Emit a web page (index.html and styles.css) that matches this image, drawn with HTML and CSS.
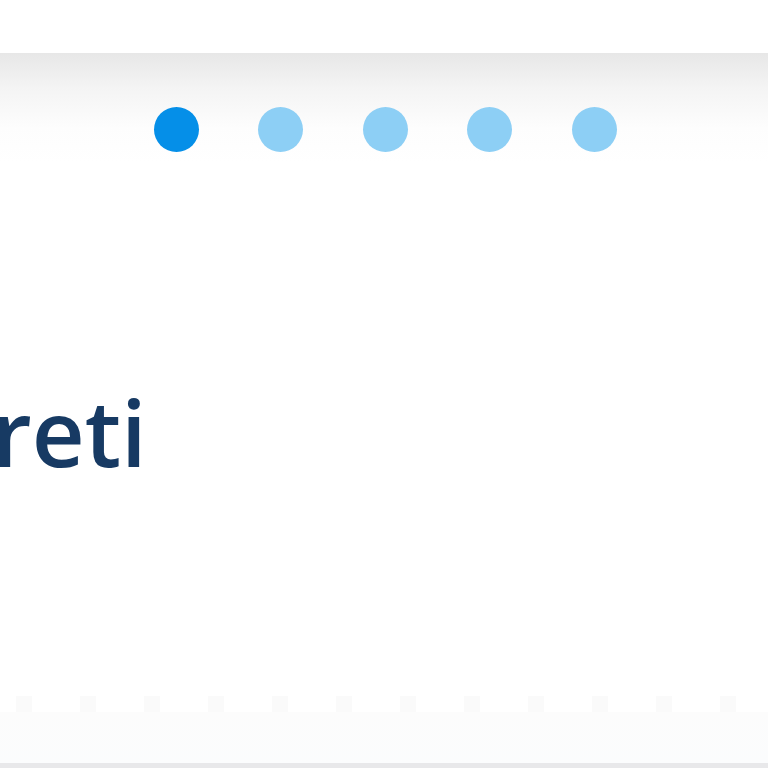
FILE: index.html
```html
<!DOCTYPE html>
<html lang="it">
  <head>
    <meta charset="UTF-8" />
    <meta name="viewport" content="width=device-width, initial-scale=1.0" />
    <title>Slider</title>
    <link rel="stylesheet" href="styles.css">
  </head>
  <body>
    <!-- barra superiore -->
    <div class="topbar"></div>

    <!-- area slider -->
    <section class="slider">
      <div class="dots">
        <span class="dot active"></span>
        <span class="dot"></span>
        <span class="dot"></span>
        <span class="dot"></span>
        <span class="dot"></span>
      </div>
      <h1 class="slide-title">reti</h1>
    </section>

    <!-- piede con puntini -->
    <footer class="footer">
      <div class="squares">
        <span></span><span></span><span></span><span></span>
        <span></span><span></span><span></span><span></span>
        <span></span><span></span><span></span><span></span>
      </div>
      <div class="footer-band"></div>
      <div class="footer-line"></div>
    </footer>
  </body>
</html>
```

FILE: styles.css
```css
/* stile base */
body {
  margin: 0;
  padding: 0;
  background-color: #fff;
  font-family: "Open Sans", "Liberation Sans", sans-serif;
  overflow: hidden;
  height: 768px;
}

.topbar {
  height: 53px;
  background-color: #fff;
}

/* slider con sfumatura grigia in alto */
.slider {
  height: 643px;
  background: linear-gradient(to bottom, #e7e7e7 0px, #f4f4f4 35px, #fdfdfd 75px, #fff 110px);
}

.dots {
  display: flex;
  justify-content: center;
  gap: 59.5px;
  padding-top: 54px;
  padding-left: 2px;
}

.dot {
  width: 45px;
  height: 45px;
  border-radius: 50%;
  background-color: #8dcff5;
}

.dot.active {
  background-color: #058fe8;
}

.slide-title {
  margin: 0;
  margin-top: 234px;
  margin-left: -8px;
  font-size: 92px;
  font-weight: 600;
  line-height: 1;
  color: #173a63;
}

/* piede */
.footer {
  height: 72px;
}

.squares {
  display: flex;
  gap: 48px;
  padding-left: 16px;
  height: 16px;
}

.squares span {
  width: 16px;
  height: 16px;
  background-color: #fafafa;
}

.footer-band {
  height: 51px;
  background: linear-gradient(to bottom, #fcfcfc, #fbfcfd);
}

.footer-line {
  height: 5px;
  background-color: #e8e8ea;
}
```
